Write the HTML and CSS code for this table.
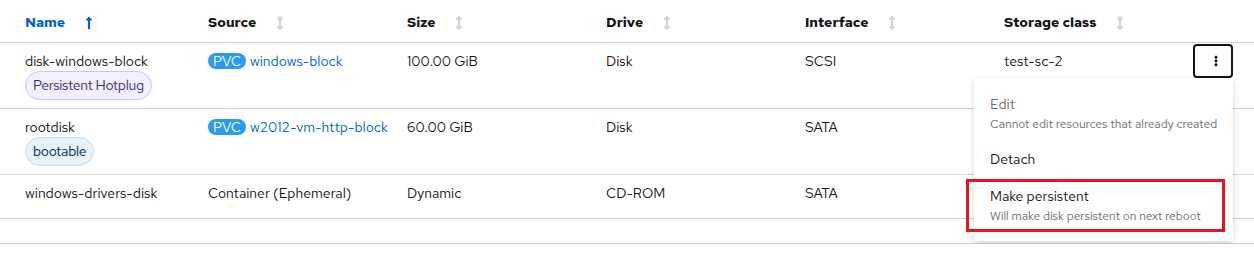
FILE: index.html
```html
<!doctype html>
<html lang="en">
    <head>
        <meta charset="UTF-8" />
        <title>Disks</title>
        <link rel="stylesheet" href="styles.css">
    </head>
    <body>
        <div class="disk-table">
            <div class="row head">
                <div class="cell first sorted">Name
                    <svg class="sort-icon" viewBox="0 0 256 512"><path d="M88 166.059V468c0 6.627 5.373 12 12 12h56c6.627 0 12-5.373 12-12V166.059h46.059c21.382 0 32.09-25.851 16.971-40.971l-86.059-86.059c-9.373-9.373-24.569-9.373-33.941 0l-86.059 86.059c-15.119 15.119-4.411 40.971 16.971 40.971H88z"/></svg>
                </div>
                <div class="cell">Source
                    <svg class="sort-icon" viewBox="0 0 256 512"><path d="M214.059 377.941H168V134.059h46.059c21.382 0 32.09-25.851 16.971-40.971L144.971 7.029c-9.373-9.373-24.568-9.373-33.941 0L24.971 93.088c-15.119 15.119-4.411 40.971 16.971 40.971H88v243.882H41.941c-21.382 0-32.09 25.851-16.971 40.971l86.059 86.059c9.373 9.373 24.568 9.373 33.941 0l86.059-86.059c15.12-15.119 4.412-40.971-16.97-40.971z"/></svg>
                </div>
                <div class="cell">Size
                    <svg class="sort-icon" viewBox="0 0 256 512"><path d="M214.059 377.941H168V134.059h46.059c21.382 0 32.09-25.851 16.971-40.971L144.971 7.029c-9.373-9.373-24.568-9.373-33.941 0L24.971 93.088c-15.119 15.119-4.411 40.971 16.971 40.971H88v243.882H41.941c-21.382 0-32.09 25.851-16.971 40.971l86.059 86.059c9.373 9.373 24.568 9.373 33.941 0l86.059-86.059c15.12-15.119 4.412-40.971-16.97-40.971z"/></svg>
                </div>
                <div class="cell">Drive
                    <svg class="sort-icon" viewBox="0 0 256 512"><path d="M214.059 377.941H168V134.059h46.059c21.382 0 32.09-25.851 16.971-40.971L144.971 7.029c-9.373-9.373-24.568-9.373-33.941 0L24.971 93.088c-15.119 15.119-4.411 40.971 16.971 40.971H88v243.882H41.941c-21.382 0-32.09 25.851-16.971 40.971l86.059 86.059c9.373 9.373 24.568 9.373 33.941 0l86.059-86.059c15.12-15.119 4.412-40.971-16.97-40.971z"/></svg>
                </div>
                <div class="cell">Interface
                    <svg class="sort-icon" viewBox="0 0 256 512"><path d="M214.059 377.941H168V134.059h46.059c21.382 0 32.09-25.851 16.971-40.971L144.971 7.029c-9.373-9.373-24.568-9.373-33.941 0L24.971 93.088c-15.119 15.119-4.411 40.971 16.971 40.971H88v243.882H41.941c-21.382 0-32.09 25.851-16.971 40.971l86.059 86.059c9.373 9.373 24.568 9.373 33.941 0l86.059-86.059c15.12-15.119 4.412-40.971-16.97-40.971z"/></svg>
                </div>
                <div class="cell">Storage class
                    <svg class="sort-icon" viewBox="0 0 256 512"><path d="M214.059 377.941H168V134.059h46.059c21.382 0 32.09-25.851 16.971-40.971L144.971 7.029c-9.373-9.373-24.568-9.373-33.941 0L24.971 93.088c-15.119 15.119-4.411 40.971 16.971 40.971H88v243.882H41.941c-21.382 0-32.09 25.851-16.971 40.971l86.059 86.059c9.373 9.373 24.568 9.373 33.941 0l86.059-86.059c15.12-15.119 4.412-40.971-16.97-40.971z"/></svg>
                </div>
                <div class="cell"></div>
            </div>

            <div class="row tall">
                <div class="cell first stack">
                    <span>disk-windows-block</span>
                    <span class="label purple">Persistent Hotplug</span>
                </div>
                <div class="cell"><span class="badge">PVC</span><a href="#">windows-block</a></div>
                <div class="cell">100.00 GiB</div>
                <div class="cell">Disk</div>
                <div class="cell">SCSI</div>
                <div class="cell">test-sc-2</div>
                <div class="cell actions">
                    <button class="kebab">
                        <svg viewBox="0 0 192 512"><path d="M96 184c39.8 0 72 32.2 72 72s-32.2 72-72 72-72-32.2-72-72 32.2-72 72-72zM24 80c0 39.8 32.2 72 72 72s72-32.2 72-72S135.8 8 96 8 24 40.2 24 80zm0 352c0 39.8 32.2 72 72 72s72-32.2 72-72-32.2-72-72-72-72 32.2-72 72z"/></svg>
                    </button>
                    <ul class="menu">
                        <li class="menu-item disabled">
                            <div class="item-title">Edit</div>
                            <div class="item-desc">Cannot edit resources that already created</div>
                        </li>
                        <li class="menu-item">
                            <div class="item-title">Detach</div>
                        </li>
                        <li class="menu-item highlighted">
                            <div class="item-title">Make persistent</div>
                            <div class="item-desc">Will make disk persistent on next reboot</div>
                        </li>
                    </ul>
                </div>
            </div>

            <div class="row tall">
                <div class="cell first stack">
                    <span>rootdisk</span>
                    <span class="label blue">bootable</span>
                </div>
                <div class="cell"><span class="badge">PVC</span><a href="#">w2012-vm-http-block</a></div>
                <div class="cell">60.00 GiB</div>
                <div class="cell">Disk</div>
                <div class="cell">SATA</div>
                <div class="cell"></div>
                <div class="cell"></div>
            </div>

            <div class="row plain">
                <div class="cell first">windows-drivers-disk</div>
                <div class="cell">Container (Ephemeral)</div>
                <div class="cell">Dynamic</div>
                <div class="cell">CD-ROM</div>
                <div class="cell">SATA</div>
                <div class="cell"></div>
                <div class="cell"></div>
            </div>

            <div class="row empty"></div>
        </div>
    </body>
</html>
```

FILE: styles.css
```css
body {
    margin: 0;
    font-family: "Red Hat Text", Roboto, sans-serif;
    font-size: 14px;
    line-height: 21px;
    color: #151515;
    background-color: #ffffff;
}
.disk-table {
    width: 1254px;
}
.row {
    display: grid;
    grid-template-columns: 200px 199px 199px 199px 199px 189px 69px;
    border-bottom: 1px solid #d2d2d2;
    box-sizing: content-box;
}
.cell {
    padding: 0 8px;
    min-width: 0;
    white-space: nowrap;
}
.cell.first {
    padding-left: 25px;
}

/* Header */
.head {
    height: 42px;
    font-weight: 700;
}
.head .cell {
    padding-top: 12px;
    display: flex;
    align-items: flex-start;
    gap: 20px;
}
.head .sorted {
    color: #0066cc;
}
.sort-icon {
    width: 8px;
    height: 14px;
    margin-top: 4px;
    fill: #d2d2d2;
}
.sorted .sort-icon {
    fill: #0066cc;
}

/* Body rows */
.tall {
    height: 65px;
}
.tall .cell {
    padding-top: 8px;
}
.plain {
    height: 43px;
}
.plain .cell {
    padding-top: 8px;
}
.empty {
    height: 24px;
}
.stack {
    display: flex;
    flex-direction: column;
    align-items: flex-start;
}
a {
    color: #0066cc;
    text-decoration: none;
}
.badge {
    display: inline-block;
    height: 16px;
    line-height: 16px;
    padding: 0 5px;
    margin-right: 4px;
    border-radius: 8px;
    background-color: #2b9af3;
    color: #ffffff;
}
.label {
    display: inline-block;
    padding: 3px 7px;
    border-radius: 15px;
    border: 1px solid;
    line-height: 21px;
    letter-spacing: -0.3px;
    margin-top: -1px;
}
.label.purple {
    background-color: #f2f0fc;
    border-color: #cbc1ff;
    color: #3c2a88;
}
.label.blue {
    background-color: #e7f1fa;
    border-color: #bee1f4;
    color: #002952;
}

/* Actions */
.actions {
    position: relative;
    padding-top: 1px !important;
}
.kebab {
    width: 40px;
    height: 34px;
    border: 2px solid #151515;
    border-radius: 4px;
    background: #ffffff;
    display: flex;
    align-items: center;
    justify-content: center;
    padding: 0 0 0 6px;
}
.kebab svg {
    width: 4px;
    height: 14px;
    fill: #151515;
}
.menu {
    position: absolute;
    top: 35px;
    right: 21px;
    width: 259px;
    margin: 0;
    padding: 8px 0;
    list-style: none;
    background-color: #ffffff;
    box-shadow: 0 4px 8px 0 rgba(3, 3, 3, 0.12), 0 0 4px 0 rgba(3, 3, 3, 0.06);
    z-index: 10;
}
.menu-item {
    position: relative;
    padding: 8px 16px;
}
.item-title {
    font-size: 14px;
    line-height: 21px;
    color: #151515;
}
.item-desc {
    font-size: 12px;
    line-height: 18px;
    color: #6a6e73;
}
.disabled .item-title {
    color: #6a6e73;
}
/* Annotation box round the highlighted item */
.highlighted::after {
    content: "";
    position: absolute;
    top: 1px;
    bottom: 1px;
    left: -8px;
    right: 8px;
    border: 3px solid #e5141f;
}
```
